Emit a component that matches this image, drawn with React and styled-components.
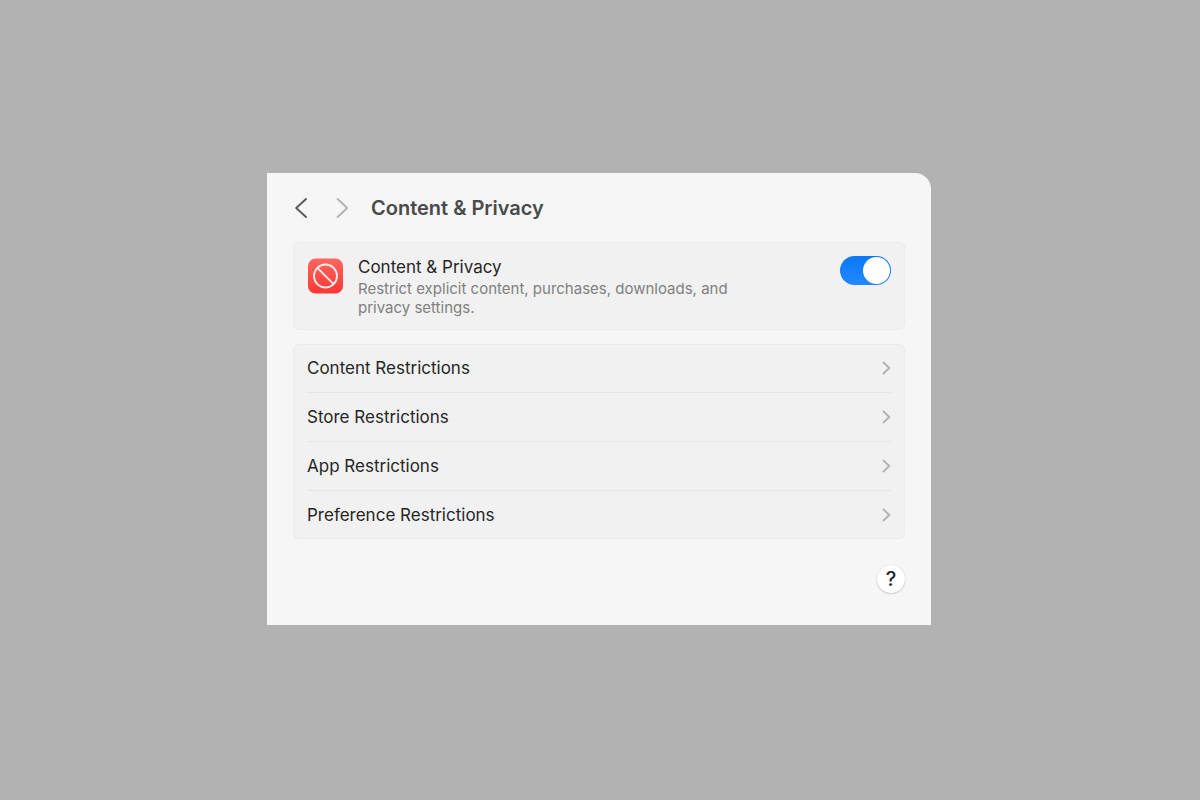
import React, { useState } from 'react';
import styled, { createGlobalStyle } from 'styled-components';

const GlobalStyle = createGlobalStyle`
  * {
    box-sizing: border-box;
  }

  body {
    margin: 0;
    background-color: #b2b2b2;
    font-family: Inter, 'Liberation Sans', sans-serif;
    color: #262626;
  }

  button,
  input {
    font-family: inherit;
    color: inherit;
    margin: 0;
  }
`;

const Page = styled.div`
  min-height: 100vh;
  display: flex;
  align-items: center;
  justify-content: center;
  padding: 24px 26px 26px 24px;
`;

const Window = styled.main`
  width: 100%;
  max-width: 664px;
  padding: 16px 26px 32px;
  background-color: #f6f6f6;
  border-radius: 0 16px 0 0;
`;

const Header = styled.header`
  display: flex;
  align-items: center;
  gap: 21px;
  height: 38px;
  margin-bottom: 15px;
`;

const Nav = styled.nav`
  display: flex;
  gap: 25px;
`;

const NavButton = styled.button`
  display: flex;
  align-items: center;
  justify-content: center;
  width: 16px;
  height: 28px;
  padding: 0;
  border: none;
  background: none;
  color: #5c5c5c;
  cursor: pointer;

  &:disabled {
    color: #b4b4b4;
    cursor: default;
  }
`;

const Title = styled.h1`
  margin: 0;
  font-size: 20px;
  line-height: 24px;
  font-weight: 600;
  color: #4a4a4a;
`;

const Card = styled.section`
  margin-bottom: 14px;
  padding: 0 14px;
  background-color: #f1f1f1;
  box-shadow: inset 0 0 0 1px #ebebeb;
  border-radius: 6px;
`;

const Feature = styled.div`
  display: flex;
  align-items: flex-start;
  padding: 14px 0 13px;
`;

const AppIcon = styled.svg`
  flex: none;
  width: 36px;
  height: 36px;
  margin: 2px 15px 0 0;
`;

const FeatureText = styled.div`
  flex: 1;
`;

const FeatureName = styled.label`
  display: block;
  margin-bottom: 1px;
  font-size: 17px;
  line-height: 22px;
`;

const Description = styled.p`
  max-width: 400px;
  margin: 0;
  font-size: 15px;
  line-height: 19px;
  color: #808080;
`;

const Switch = styled.input`
  flex: none;
  appearance: none;
  display: flex;
  width: 51px;
  height: 29px;
  padding: 1px;
  border-radius: 15px;
  background: linear-gradient(#0a78f8, #2388ff);
  cursor: pointer;
  justify-content: flex-end;

  &::before {
    content: '';
    width: 27px;
    height: 27px;
    border-radius: 50%;
    background-color: #fff;
  }

  &:not(:checked) {
    background: #d5d5d5;
    justify-content: flex-start;
  }
`;

const List = styled.ul`
  margin: 0;
  padding: 0;
  list-style: none;
`;

const ListItem = styled.li`
  & + & {
    border-top: 1px solid #e6e6e6;
  }
`;

const RowButton = styled.button`
  display: flex;
  align-items: center;
  justify-content: space-between;
  width: 100%;
  height: 48px;
  padding: 0;
  border: none;
  background: none;
  font-size: 17px;
  line-height: 24px;
  text-align: left;
  cursor: pointer;
`;

const Footer = styled.footer`
  display: flex;
  justify-content: flex-end;
  padding-top: 12px;
`;

const HelpButton = styled.button`
  width: 28px;
  height: 28px;
  padding: 0;
  border: none;
  border-radius: 50%;
  background-color: #fff;
  box-shadow: 0 0 1px rgba(0, 0, 0, 0.2), 0 1px 2px rgba(0, 0, 0, 0.16);
  font-size: 20px;
  line-height: 28px;
  font-weight: 500;
  cursor: pointer;
`;

const restrictions = [
  'Content Restrictions',
  'Store Restrictions',
  'App Restrictions',
  'Preference Restrictions',
];

const BackIcon = () => (
  <svg width="14" height="22" viewBox="0 0 14 22" fill="none" aria-hidden="true">
    <path d="M12 2 2.2 11 12 20" stroke="currentColor" strokeWidth="2" strokeLinecap="round" strokeLinejoin="round" />
  </svg>
);

const ForwardIcon = () => (
  <svg width="14" height="22" viewBox="0 0 14 22" fill="none" aria-hidden="true">
    <path d="M2.6 2 12.2 11 2.6 20" stroke="currentColor" strokeWidth="2" strokeLinecap="round" strokeLinejoin="round" />
  </svg>
);

const RowChevron = () => (
  <svg width="9" height="14" viewBox="0 0 9 14" fill="none" aria-hidden="true">
    <path d="M1.5 1.5 7.3 7l-5.8 5.5" stroke="#b3b3b3" strokeWidth="1.9" strokeLinecap="round" strokeLinejoin="round" />
  </svg>
);

const RestrictIcon = () => (
  <AppIcon viewBox="0 0 36 36" fill="none" aria-hidden="true">
    <defs>
      <linearGradient id="restrict-fill" x1="0" y1="0" x2="0" y2="1">
        <stop offset="0" stopColor="#ff6660" />
        <stop offset="1" stopColor="#fb3733" />
      </linearGradient>
    </defs>
    <rect x="1" y="0.5" width="35" height="35" rx="7.5" fill="url(#restrict-fill)" />
    <circle cx="18.5" cy="18" r="11.5" stroke="#ffeceb" strokeWidth="1.9" />
    <path d="m10.4 9.9 16.2 16.2" stroke="#ffeceb" strokeWidth="1.9" />
  </AppIcon>
);

const App = () => {
  const [enabled, setEnabled] = useState(true);

  return (
    <>
      <GlobalStyle />
      <Page>
        <Window>
          <Header>
            <Nav>
              <NavButton type="button" aria-label="Back">
                <BackIcon />
              </NavButton>
              <NavButton type="button" aria-label="Forward" disabled>
                <ForwardIcon />
              </NavButton>
            </Nav>
            <Title>Content &amp; Privacy</Title>
          </Header>

          <Card>
            <Feature>
              <RestrictIcon />
              <FeatureText>
                <FeatureName htmlFor="content-privacy">Content &amp; Privacy</FeatureName>
                <Description id="content-privacy-info">
                  Restrict explicit content, purchases, downloads, and privacy settings.
                </Description>
              </FeatureText>
              <Switch
                type="checkbox"
                role="switch"
                id="content-privacy"
                aria-describedby="content-privacy-info"
                checked={enabled}
                onChange={(e) => setEnabled(e.target.checked)}
              />
            </Feature>
          </Card>

          <Card>
            <List>
              {restrictions.map((name) => (
                <ListItem key={name}>
                  <RowButton type="button">
                    {name}
                    <RowChevron />
                  </RowButton>
                </ListItem>
              ))}
            </List>
          </Card>

          <Footer>
            <HelpButton type="button" aria-label="Help">?</HelpButton>
          </Footer>
        </Window>
      </Page>
    </>
  );
};

export default App;
